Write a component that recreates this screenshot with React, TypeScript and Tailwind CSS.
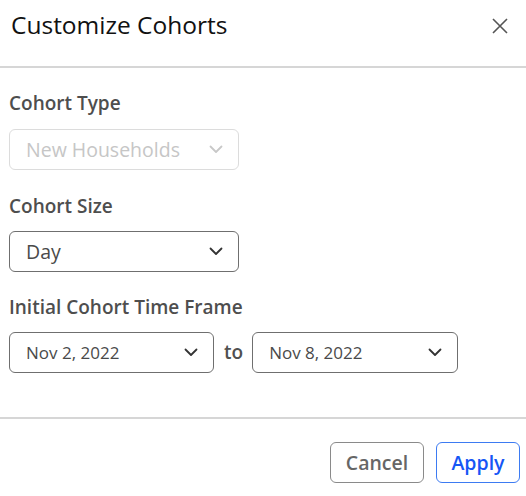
import React from "react";

const font = { fontFamily: '"Open Sans", "Noto Sans", sans-serif' };

function Chevron({ className }: { className: string }) {
  return (
    <svg width="14" height="9" viewBox="0 0 14 9" fill="none" className={className}>
      <path d="M1.5 1.5 L7 7 L12.5 1.5" stroke="currentColor" strokeWidth="1.8" strokeLinecap="round" strokeLinejoin="round" />
    </svg>
  );
}

function Select({
  value,
  width,
  textSize,
  disabled = false,
}: {
  value: string;
  width: string;
  textSize: string;
  disabled?: boolean;
}) {
  return (
    <div
      className={
        "flex h-[41px] items-center justify-between rounded-[6px] border pl-4 pr-[15px] " +
        width +
        (disabled ? " border-[#dcdcdc] text-[#c6c6c6]" : " border-[#6f6f6f] text-[#4a4a4a]")
      }
    >
      <span className={"font-medium " + textSize}>{value}</span>
      <Chevron className={disabled ? "text-[#c8c8c8]" : "text-[#333]"} />
    </div>
  );
}

function Label({ children, mt }: { children: React.ReactNode; mt: string }) {
  return (
    <div className={"h-[26px] text-[19px] font-semibold leading-[26px] text-[#4e4e4e] " + mt}>{children}</div>
  );
}

export default function App() {
  return (
    <div className="w-[526px] h-[496px] bg-white" style={font}>
      <div className="flex h-[68px] items-start justify-between border-b-2 border-[#d6d6d6] pl-[11px] pr-[18px] pt-[9px]">
        <h1 className="text-[24.5px] font-normal leading-8 text-[#111]">Customize Cohorts</h1>
        <svg width="16" height="16" viewBox="0 0 16 16" className="mt-[9px] text-[#555]">
          <path d="M1 1 L15 15 M15 1 L1 15" stroke="currentColor" strokeWidth="1.6" />
        </svg>
      </div>

      <div className="px-[9px] pt-[22px] pb-[44px]">
        <Label mt="mt-0">Cohort Type</Label>
        <div className="mt-[13px]">
          <Select value="New Households" width="w-[230px]" textSize="text-[19.5px]" disabled />
        </div>

        <Label mt="mt-[23px]">Cohort Size</Label>
        <div className="mt-[12px]">
          <Select value="Day" width="w-[230px]" textSize="text-[19.5px]" />
        </div>

        <Label mt="mt-[22px]">Initial Cohort Time Frame</Label>
        <div className="mt-[12px] flex items-center">
          <Select value="Nov 2, 2022" width="w-[205px]" textSize="text-[17px]" />
          <span className="ml-[10px] mr-[9px] text-[19px] font-semibold text-[#505050]">to</span>
          <Select value="Nov 8, 2022" width="w-[206px]" textSize="text-[17px]" />
        </div>
      </div>

      <div className="flex justify-end gap-3 border-t-2 border-[#d6d6d6] pt-[23px] pr-[6px]">
        <button className="h-[41px] w-[94px] rounded-[6px] border border-[#8a8a8a] text-[19.5px] font-semibold text-[#666]">
          Cancel
        </button>
        <button className="h-[41px] w-[84px] rounded-[6px] border border-[#3d7bf2] text-[19.5px] font-semibold text-[#1656f5]">
          Apply
        </button>
      </div>
    </div>
  );
}
